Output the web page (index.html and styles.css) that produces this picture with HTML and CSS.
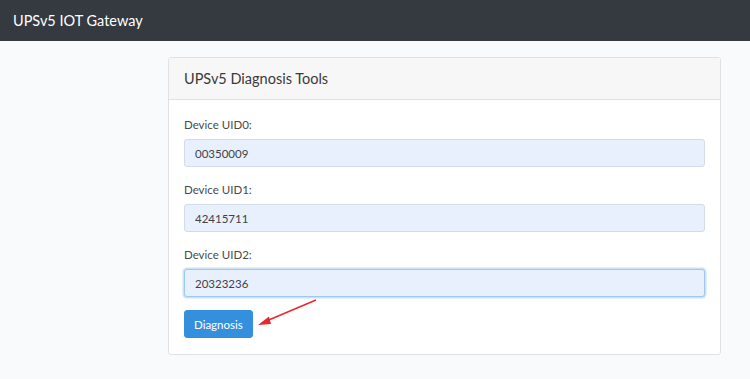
FILE: index.html
```html
<!DOCTYPE html>
<html>
<head>
<meta charset="utf-8">
<link rel="stylesheet" href="styles.css">
</head>
<body>
<nav class="navbar"><span class="brand">UPSv5 IOT Gateway</span></nav>
<main class="main">
  <div class="card">
    <div class="card-header">UPSv5 Diagnosis Tools</div>
    <div class="card-body">
      <div class="group">
        <label class="label">Device UID0:</label>
        <input class="input" type="text" value="00350009">
      </div>
      <div class="group">
        <label class="label">Device UID1:</label>
        <input class="input" type="text" value="42415711">
      </div>
      <div class="group last">
        <label class="label">Device UID2:</label>
        <input class="input focus" type="text" value="20323236">
      </div>
      <div class="actions">
        <button class="btn">Diagnosis</button>
        <svg class="arrow" width="70" height="40" viewBox="0 0 70 40">
          <line x1="62" y1="3" x2="10" y2="25" stroke="#e8262b" stroke-width="1.4"/>
          <polygon points="4,28 15,19.5 17,27" fill="#e8262b"/>
        </svg>
      </div>
    </div>
  </div>
</main>
</body>
</html>
```
FILE: styles.css
```css
html, body { margin: 0; padding: 0; }
body {
  background: #f8fafc;
  font-family: Lato, "Open Sans", sans-serif;
  color: #212529;
  width: 750px;
  height: 379px;
  overflow: hidden;
}
.navbar {
  height: 41px;
  background: #343a40;
  display: flex;
  align-items: center;
  padding-left: 13px;
}
.brand {
  color: #fff;
  font-size: 14.5px;
}
.main {
  padding: 16px 0 0 168px;
}
.card {
  width: 551px;
  background: #fff;
  border: 1px solid #dfe1e3;
  border-radius: 3px;
}
.card-header {
  height: 42px;
  box-sizing: border-box;
  background: #f7f7f7;
  border-bottom: 1px solid #dfe1e3;
  padding: 0 15px;
  display: flex;
  align-items: center;
  font-size: 14.5px;
  color: #3a3a3a;
}
.card-body {
  padding: 16px 15px 16px;
}
.group {
  display: flex;
  flex-direction: column;
  margin-bottom: 14px;
}
.group.last { margin-bottom: 13px; }
.label {
  font-size: 11.5px;
  line-height: 17px;
  margin-bottom: 6px;
  color: #4a4a4a;
}
.input {
  height: 28px;
  box-sizing: border-box;
  border: 1px solid #d3dbe4;
  border-radius: 3px;
  background: #e8f0fe;
  padding: 0 10px;
  font-family: Lato, "Open Sans", sans-serif;
  font-size: 11.5px;
  color: #3d4349;
  outline: none;
}
.input.focus {
  border-color: #9ec8ec;
  box-shadow: 0 0 0 1.5px rgba(52,144,220,.25);
}
.actions {
  position: relative;
  height: 28px;
}
.btn {
  height: 28px;
  padding: 0 9px;
  background: #3490dc;
  border: 1px solid #3490dc;
  border-radius: 3px;
  color: #fff;
  font-family: Lato, "Open Sans", sans-serif;
  font-size: 11.5px;
}
.arrow {
  position: absolute;
  left: 70px;
  top: -13px;
}
```
